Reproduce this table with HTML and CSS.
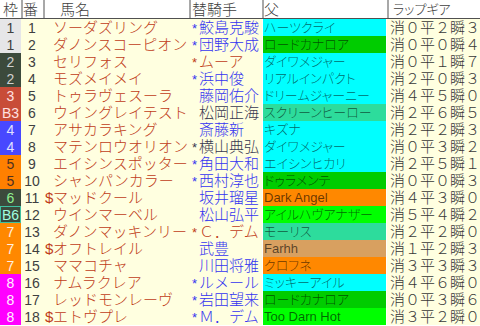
FILE: index.html
```html
<!DOCTYPE html>
<html lang="ja">
<head>
<meta charset="utf-8">
<link rel="stylesheet" href="styles.css">
</head>
<body>
<div class="table">
  <div class="head">
    <div class="h-waku">枠</div>
    <div class="sep h-ban">番</div>
    <div class="sep h-name">馬名</div>
    <div class="sep h-jockey">替騎手</div>
    <div class="sep h-sire">父</div>
    <div class="sep h-lap">ラップギア</div>
  </div>

  <div class="row"><div class="waku w1">1</div><div class="ban">1</div><div class="name"><span class="pre"></span>ソーダズリング</div><div class="jockey j-blue"><span class="jpre">*</span>鮫島克駿</div><div class="sire s-cyan">ハーツクライ</div><div class="lap">消０平２瞬３</div></div>
  <div class="row"><div class="waku w1">1</div><div class="ban">2</div><div class="name"><span class="pre"></span>ダノンスコーピオン</div><div class="jockey j-blue"><span class="jpre">*</span>団野大成</div><div class="sire s-green">ロードカナロア</div><div class="lap">消０平０瞬４</div></div>
  <div class="row"><div class="waku w2">2</div><div class="ban">3</div><div class="name"><span class="pre"></span>セリフォス</div><div class="jockey j-brown"><span class="jpre">*</span>ムーア</div><div class="sire s-cyan">ダイワメジャー</div><div class="lap">消０平１瞬７</div></div>
  <div class="row"><div class="waku w2">2</div><div class="ban">4</div><div class="name"><span class="pre"></span>モズメイメイ</div><div class="jockey j-blue"><span class="jpre">*</span>浜中俊</div><div class="sire s-cyan">リアルインパクト</div><div class="lap">消２平０瞬３</div></div>
  <div class="row"><div class="waku w3">3</div><div class="ban">5</div><div class="name"><span class="pre"></span>トゥラヴェスーラ</div><div class="jockey j-blue"><span class="jpre"></span>藤岡佑介</div><div class="sire s-cyan">ドリームジャーニー</div><div class="lap">消４平５瞬０</div></div>
  <div class="row"><div class="waku w3">B3</div><div class="ban">6</div><div class="name"><span class="pre"></span>ウイングレイテスト</div><div class="jockey j-dark"><span class="jpre"></span>松岡正海</div><div class="sire s-teal">スクリーンヒーロー</div><div class="lap">消２平６瞬５</div></div>
  <div class="row"><div class="waku w4">4</div><div class="ban">7</div><div class="name"><span class="pre"></span>アサカラキング</div><div class="jockey j-blue"><span class="jpre"></span>斎藤新</div><div class="sire s-cyan">キズナ</div><div class="lap">消２平２瞬３</div></div>
  <div class="row"><div class="waku w4">4</div><div class="ban">8</div><div class="name"><span class="pre"></span>マテンロウオリオン</div><div class="jockey j-dark"><span class="jpre">*</span>横山典弘</div><div class="sire s-cyan">ダイワメジャー</div><div class="lap">消０平３瞬２</div></div>
  <div class="row"><div class="waku w5">5</div><div class="ban">9</div><div class="name"><span class="pre"></span>エイシンスポッター</div><div class="jockey j-blue"><span class="jpre">*</span>角田大和</div><div class="sire s-cyan">エイシンヒカリ</div><div class="lap">消２平５瞬１</div></div>
  <div class="row"><div class="waku w5">5</div><div class="ban">10</div><div class="name"><span class="pre"></span>シャンパンカラー</div><div class="jockey j-blue"><span class="jpre">*</span>西村淳也</div><div class="sire s-green">ドゥラメンテ</div><div class="lap">消０平０瞬３</div></div>
  <div class="row"><div class="waku w6">6</div><div class="ban">11</div><div class="name"><span class="pre">$</span>マッドクール</div><div class="jockey j-blue"><span class="jpre"></span>坂井瑠星</div><div class="sire s-orange">Dark Angel</div><div class="lap">消４平３瞬０</div></div>
  <div class="row"><div class="waku w6b">B6</div><div class="ban">12</div><div class="name"><span class="pre"></span>ウインマーベル</div><div class="jockey j-blue"><span class="jpre"></span>松山弘平</div><div class="sire s-lime">アイルハヴアナザー</div><div class="lap">消５平４瞬２</div></div>
  <div class="row"><div class="waku w7">7</div><div class="ban">13</div><div class="name"><span class="pre"></span>ダノンマッキンリー</div><div class="jockey j-brown"><span class="jpre">*</span>Ｃ．デム</div><div class="sire s-teal">モーリス</div><div class="lap">消２平２瞬０</div></div>
  <div class="row"><div class="waku w7">7</div><div class="ban">14</div><div class="name"><span class="pre">$</span>オフトレイル</div><div class="jockey j-blue"><span class="jpre"></span>武豊</div><div class="sire s-tan">Farhh</div><div class="lap">消１平２瞬３</div></div>
  <div class="row"><div class="waku w7">7</div><div class="ban">15</div><div class="name"><span class="pre"></span>ママコチャ</div><div class="jockey j-blue"><span class="jpre"></span>川田将雅</div><div class="sire s-orange">クロフネ</div><div class="lap">消３平３瞬３</div></div>
  <div class="row"><div class="waku w8">8</div><div class="ban">16</div><div class="name"><span class="pre"></span>ナムラクレア</div><div class="jockey j-blue"><span class="jpre">*</span>ルメール</div><div class="sire s-cyan">ミッキーアイル</div><div class="lap">消４平６瞬０</div></div>
  <div class="row"><div class="waku w8">8</div><div class="ban">17</div><div class="name"><span class="pre"></span>レッドモンレーヴ</div><div class="jockey j-blue"><span class="jpre">*</span>岩田望来</div><div class="sire s-green">ロードカナロア</div><div class="lap">消０平３瞬６</div></div>
  <div class="row"><div class="waku w8">8</div><div class="ban">18</div><div class="name"><span class="pre">$</span>エトヴプレ</div><div class="jockey j-blue"><span class="jpre">*</span>Ｍ．デム</div><div class="sire s-lime">Too Darn Hot</div><div class="lap">消３平２瞬０</div></div>
</div>
</body>
</html>
```

FILE: styles.css
```css
html, body {
  margin: 0;
  padding: 0;
  background: #ffffff;
}
body {
  font-family: "Liberation Sans", "Noto Sans CJK JP", sans-serif;
  font-size: 15px;
  font-weight: 300;
}
.table {
  width: 480px;
}
.head,
.row {
  display: grid;
  grid-template-columns: 21px 22px 146px 73px 125px 93px;
}
.head {
  height: 18px;
  border-bottom: 1px solid #505050;
  background: #ffffff;
  color: #404040;
  line-height: 16px;
}
.head > div,
.row > div {
  box-sizing: border-box;
  white-space: nowrap;
  padding-top: 1px;
}
.head > div {
  padding-top: 2px;
}
.head .sep {
  border-left: 2px solid #a8a8a8;
}
.h-waku { text-align: center; }
.h-name { padding-left: 15px; }
.h-jockey { padding-left: 1px; }
.h-lap {
  padding-left: 4px;
  font-size: 13px;
  font-feature-settings: "palt";
}
.row {
  height: 17px;
  background: #ffffe0;
  line-height: 16px;
}
.waku {
  text-align: center;
  border-bottom: 1px solid #ffffff;
  font-size: 14px;
}
.ban {
  text-align: center;
  color: #404040;
  font-size: 14px;
}
.name {
  padding-left: 2px;
  color: #c03c18;
}
.pre {
  display: inline-block;
  width: 8px;
}
.jockey {
  padding-left: 3px;
}
.jpre {
  display: inline-block;
  width: 7px;
  font-size: 13px;
}
.j-blue { color: #3434f0; }
.j-brown { color: #c03c18; }
.j-dark { color: #383850; }
.sire {
  border-left: 1px solid #ffffff;
  border-right: 1px solid #ffffff;
  border-bottom: 1px solid #ffffff;
  padding-left: 1px;
  font-size: 13px;
  font-feature-settings: "palt";
  color: rgba(0, 0, 0, 0.6);
}
.lap {
  padding-left: 3px;
  color: #383838;
}

.w1 { background: #e6e6e8; color: #404040; }
.w2 { background: #3c4a3c; color: #d0d0d0; }
.w3 { background: #c84c38; color: #ffe0e0; }
.w4 { background: #4848ff; color: #e0e0ff; }
.w5 { background: #ff8000; color: #503020; }
.w6 { background: #3c4a3c; color: #90f090; }
.w6b { background: #3c4a3c; color: #a0ffe0; box-shadow: inset 0 0 0 1px #40c0a0; }
.w7 { background: #ff8800; color: #fff0e0; }
.w8 { background: #ff00ff; color: #fff0ff; }

.s-cyan { background: #00ffff; }
.s-green { background: #00cc00; }
.s-teal { background: #2ddc9c; }
.s-orange { background: #ff8800; }
.s-lime { background: #00ff00; }
.s-tan { background: #d8a060; }
```
